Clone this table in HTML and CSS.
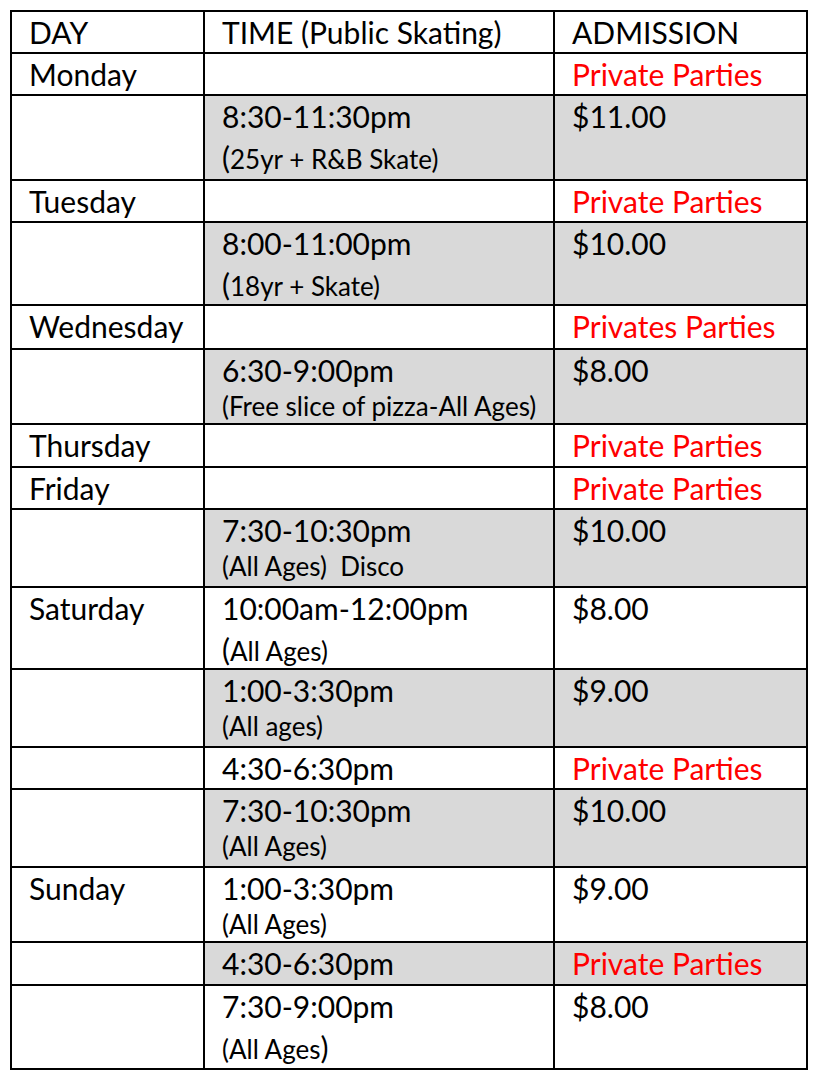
FILE: index.html
```html
<!DOCTYPE html>
<html>
<head>
<meta charset="utf-8">
<link rel="stylesheet" href="styles.css">
</head>
<body>
<table class="sched">
  <colgroup><col class="c-day"><col class="c-time"><col class="c-adm"></colgroup>
  <tr class="h42"><td>DAY</td><td>TIME (Public Skating)</td><td>ADMISSION</td></tr>
  <tr class="h42"><td>Monday</td><td></td><td class="red">Private Parties</td></tr>
  <tr class="h85 g"><td></td><td>8:30-11:30pm<div class="sub big"><span class="bp">(</span>25yr + R&amp;B Skate)</div></td><td>$11.00</td></tr>
  <tr class="h42"><td>Tuesday</td><td></td><td class="red">Private Parties</td></tr>
  <tr class="h83 g"><td></td><td>8:00-11:00pm<div class="sub big"><span class="bp">(</span>18yr + Skate)</div></td><td>$10.00</td></tr>
  <tr class="h44"><td>Wednesday</td><td></td><td class="red">Privates Parties</td></tr>
  <tr class="h75 g"><td></td><td>6:30-9:00pm<div class="sub">(Free slice of pizza-All Ages)</div></td><td>$8.00</td></tr>
  <tr class="h43"><td>Thursday</td><td></td><td class="red">Private Parties</td></tr>
  <tr class="h42"><td>Friday</td><td></td><td class="red">Private Parties</td></tr>
  <tr class="h78 g"><td></td><td>7:30-10:30pm<div class="sub">(All Ages)&nbsp; Disco</div></td><td>$10.00</td></tr>
  <tr class="h82"><td>Saturday</td><td>10:00am-12:00pm<div class="sub big"><span class="bp">(</span>All Ages)</div></td><td>$8.00</td></tr>
  <tr class="h78 g"><td></td><td>1:00-3:30pm<div class="sub">(All ages)</div></td><td>$9.00</td></tr>
  <tr class="h42"><td></td><td>4:30-6:30pm</td><td class="red">Private Parties</td></tr>
  <tr class="h78 g"><td></td><td>7:30-10:30pm<div class="sub">(All Ages)</div></td><td>$10.00</td></tr>
  <tr class="h75"><td>Sunday</td><td>1:00-3:30pm<div class="sub">(All Ages)</div></td><td>$9.00</td></tr>
  <tr class="h43 g"><td></td><td>4:30-6:30pm</td><td class="red">Private Parties</td></tr>
  <tr class="h84"><td></td><td>7:30-9:00pm<div class="sub big">(All Ages<span class="bp">)</span></div></td><td>$8.00</td></tr>
</table>
</body>
</html>
```

FILE: styles.css
```css
html, body {
  margin: 0;
  padding: 0;
  background: #fff;
}
body {
  padding: 10px 0 0 10px;
  font-family: Lato, "Open Sans", sans-serif;
  color: #000;
}
.sched {
  border-collapse: collapse;
  table-layout: fixed;
  width: 796px;
  border: 2px solid #000;
}
.c-day { width: 193px; }
.c-time { width: 350px; }
.c-adm { width: 253px; }
.sched td {
  border: 2px solid #000;
  vertical-align: top;
  padding: 3px 4px 0 17px;
  font-size: 30px;
  line-height: 34px;
  white-space: nowrap;
  overflow: hidden;
}
.sched tr.g td + td { background: #d9d9d9; }
.sched td.red { color: #ff0000; }
.sub {
  font-size: 26px;
  line-height: 28px;
  margin-top: 5px;
}
.sub.big { margin-top: 12px; }
.bp { font-size: 30px; line-height: 20px; }
.h42 { height: 42px; }
.h43 { height: 43px; }
.h44 { height: 44px; }
.h75 { height: 75px; }
.h78 { height: 78px; }
.h82 { height: 82px; }
.h83 { height: 83px; }
.h84 { height: 84px; }
.h85 { height: 85px; }
```
